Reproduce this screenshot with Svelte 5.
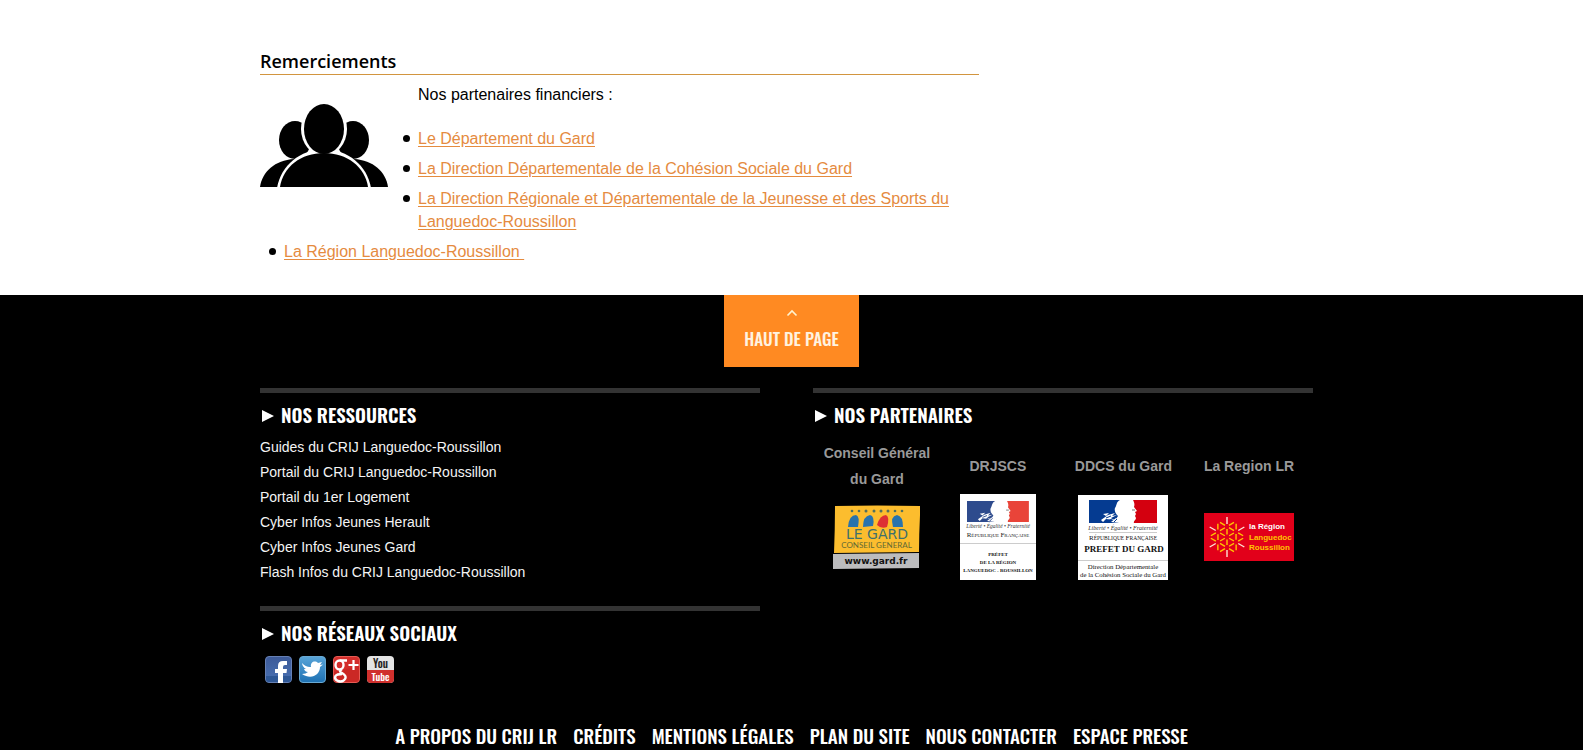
<script>
  const resources = [
    'Guides du CRIJ Languedoc-Roussillon',
    'Portail du CRIJ Languedoc-Roussillon',
    'Portail du 1er Logement',
    'Cyber Infos Jeunes Herault',
    'Cyber Infos Jeunes Gard',
    'Flash Infos du CRIJ Languedoc-Roussillon'
  ];
  const pages = ['A propos du CRIJ LR', 'Crédits', 'Mentions légales', 'Plan du site', 'Nous contacter', 'Espace presse'];
  // One arm of the sun emblem, repeated every 60 degrees
  const arms = [0, 60, 120, 180, 240, 300];
</script>

{#snippet arrow()}
  <svg class="arrow" width="12" height="12" viewBox="0 0 12 12" aria-hidden="true"><path d="M0 0 12 6 0 12z" fill="#fff" /></svg>
{/snippet}

{#snippet marianne(blue, red)}
  <rect width="68" height="23" fill="#fff" />
  <path d="M0 0H31C27 2 28 5 26 8C25 11 27 14 29 16L27 19 30 23H0z" fill={blue} />
  <path d="M44 0H68V23H45C44 21 47 20 47 18L46 16 47 14 46 12 48 11 45 7C46 4 45 2 44 0z" fill={red} />
  <path d="M12 20 19 15 26 13 23 16 28 15 22 18 26 20 17 19 14 22zM14 14 20 13 17 16zM22 22 27 18 31 23z" fill="#fff" />
  <path d="M17 18 22 16M19 21 27 17M25 22 28 19" stroke={blue} stroke-width="1" fill="none" />
  <path d="M43 10 46 10" stroke="#777" stroke-width="1" />
{/snippet}

<main class="wrap">
  <section class="thanks">
    <h1>Remerciements</h1>
    <svg class="people" width="128" height="84" viewBox="0 0 128 84" role="img" aria-label="Partenaires">
      <ellipse cx="35" cy="36" rx="16" ry="19" />
      <ellipse cx="93" cy="36" rx="16" ry="19" />
      <path d="M0 83C2 68 15 56 34 55C52 55 66 65 69 83z" />
      <path d="M128 83C126 68 113 56 94 55C76 55 62 65 59 83z" />
      <path d="M17 84C21 61 40 46 64 45C88 46 107 61 111 84z" fill="#fff" />
      <ellipse cx="64" cy="25" rx="23" ry="27" fill="#fff" />
      <path d="M20 83C23 63 41 49 64 49C87 49 105 63 108 83z" />
      <ellipse cx="64" cy="25" rx="20" ry="25" />
    </svg>
    <p>Nos partenaires financiers :</p>
    <ul>
      <li><a href="#gard">Le Département du Gard</a></li>
      <li><a href="#ddcs">La Direction Départementale de la Cohésion Sociale du Gard</a></li>
      <li><a href="#drjscs">La Direction Régionale et Départementale de la Jeunesse et des Sports du Languedoc-Roussillon</a></li>
      <li><a href="#region">La Région Languedoc-Roussillon&nbsp;</a></li>
    </ul>
  </section>
</main>

<footer>
  <a class="top" href="#app">
    <svg width="12" height="8" viewBox="0 0 12 8" aria-hidden="true"><path d="M1.500 6.500 6 2l4.500 4.500" fill="none" stroke="#fff3d0" stroke-width="1.600" /></svg>
    <span>HAUT DE PAGE</span>
  </a>

  <div class="wrap columns">
    <div class="left">
      <section class="block">
        <h2>{@render arrow()}NOS RESSOURCES</h2>
        <ul class="links">
          {#each resources as item}
            <li><a href="#ressources">{item}</a></li>
          {/each}
        </ul>
      </section>
      <section class="block">
        <h2>{@render arrow()}NOS RÉSEAUX SOCIAUX</h2>
        <div class="social">
          <a href="#facebook" aria-label="Facebook">
            <svg width="27" height="27" viewBox="0 0 27 27">
              <defs><linearGradient id="fb" x2="0" y2="1"><stop stop-color="#3d5a98" /><stop offset="1" stop-color="#4a72b4" /></linearGradient></defs>
              <rect x=".5" y=".5" width="26" height="26" rx="3.500" fill="url(#fb)" stroke="#6680b4" />
              <path d="M1 20H26V23Q26 26 23 26H4Q1 26 1 23z" fill="#2e5795" />
              <path d="M13 27V17H10V13H13V10Q13 5 18 5H22V9H20Q18 9 18 11V13H22L21.500 17H18V27z" fill="#fff" />
            </svg>
          </a>
          <a href="#twitter" aria-label="Twitter">
            <svg width="27" height="27" viewBox="0 0 27 27">
              <defs><linearGradient id="tw" x2="0" y2="1"><stop stop-color="#59a5d8" /><stop offset="1" stop-color="#1e71b3" /></linearGradient></defs>
              <rect x=".5" y=".5" width="26" height="26" rx="3.500" fill="url(#tw)" stroke="#69a9d3" />
              <path d="M3 7Q7 11.500 12 11C11 6 16 4 19 7L23 6 21 9 24 8.500 21 11C21 19 12 24 3 18Q7 18 9 16Q6 16 5 13H7Q3.500 11 3 7z" fill="#fff" />
            </svg>
          </a>
          <a href="#google" aria-label="Google+">
            <svg width="27" height="27" viewBox="0 0 27 27">
              <rect x=".5" y=".5" width="26" height="26" rx="3.500" fill="#d42e2b" stroke="#e65b54" />
              <path d="M1 16 26 10V23Q26 26 23 26H4Q1 26 1 23z" fill="#bd201f" opacity=".4" />
              <g fill="none" stroke="#fff" stroke-width="2.400">
                <ellipse cx="6.500" cy="9" rx="4" ry="4.500" />
                <path d="M7 4.500H14M9 13.500Q5 15 9 17Q14 20 12 23Q10 26.500 5 25Q1 23 2.500 20Q4 18 9 18" />
                <path d="M20.500 4V14M15.500 9H25.500" stroke-width="2.200" />
              </g>
            </svg>
          </a>
          <a href="#youtube" aria-label="YouTube">
            <svg width="27" height="27" viewBox="0 0 27 27">
              <rect width="27" height="27" rx="4" fill="#e4e4e4" />
              <path d="M0 14H27V23Q27 27 23 27H4Q0 27 0 23z" fill="#d0302d" />
              <text class="narrow" x="13.500" y="11.500" font-size="11" fill="#222">You</text>
              <text class="narrow" x="13.500" y="24.500" font-size="10" fill="#fff">Tube</text>
            </svg>
          </a>
        </div>
      </section>
    </div>

    <section class="block">
      <h2>{@render arrow()}NOS PARTENAIRES</h2>
      <table>
        <thead>
          <tr><th class="c1" scope="col">Conseil Général du Gard</th><th class="c2" scope="col">DRJSCS</th><th class="c3" scope="col">DDCS du Gard</th><th class="c4" scope="col">La Region LR</th></tr>
        </thead>
        <tbody>
          <tr>
            <td>
              <a href="#cg" aria-label="Le Gard">
                <svg width="88" height="64" viewBox="0 0 88 64">
                  <path d="M2 1Q44 0 87 1V10Q86 30 86 47L1 48Q2 24 2 1z" fill="#fcbd2e" />
                  <g fill="#53705c">
                    <circle cx="19" cy="6" r="1.300" /><circle cx="26" cy="6" r="1.300" /><circle cx="33" cy="6" r="1.500" /><circle cx="41" cy="6" r="1.500" />
                    <circle cx="48" cy="6" r="1.500" /><circle cx="55" cy="6" r="1.500" /><circle cx="62" cy="6" r="1.300" /><circle cx="69" cy="6" r="1.300" />
                  </g>
                  <g fill="#2873ad">
                    <path d="M15 22Q16 10 23 10Q27 11 25 22z" />
                    <path d="M30 22Q30 11 37 10Q42 11 40 21z" />
                    <path d="M60 22Q57 11 64 10Q70 11 70 22z" />
                  </g>
                  <path d="M44 20Q47 10 53 10Q57 12 54 22Q48 24 44 20z" fill="#dd3034" />
                  <text x="44" y="34" font-size="14" fill="#40706c" class="wide">LE GARD</text>
                  <text x="43.500" y="43" font-size="8" fill="#616a35" class="sans">CONSEIL GENERAL</text>
                  <path d="M0 49 86 48V63L0 64z" fill="#bcbcbe" />
                  <text x="43" y="59" font-size="9" fill="#111" font-weight="700" class="wide">www.gard.fr</text>
                </svg>
              </a>
            </td>
            <td>
              <a href="#drjscs" aria-label="Préfet de la région">
                <svg width="76" height="86" viewBox="0 0 76 86">
                  <rect width="76" height="86" fill="#fff" />
                  <g transform="translate(7 7) scale(.91)">{@render marianne('#2e4b8d', '#e94439')}</g>
                  <text x="38" y="34" font-size="5.500" font-style="italic" fill="#333" class="serif">Liberté • Égalité • Fraternité</text>
                  <text x="38" y="43" font-size="5" fill="#222" class="serif"><tspan font-size="7">R</tspan>ÉPUBLIQUE <tspan font-size="7">F</tspan>RANÇAISE</text>
                  <path d="M0 49.500H76" stroke="#ccc" />
                  <g font-size="5" font-weight="700" fill="#111" class="serif">
                    <text x="38" y="62">PRÉFET</text>
                    <text x="38" y="70">DE LA RÉGION</text>
                    <text x="38" y="78">LANGUEDOC - ROUSSILLON</text>
                  </g>
                </svg>
              </a>
            </td>
            <td>
              <a href="#ddcs" aria-label="Préfet du Gard">
                <svg width="90" height="85" viewBox="0 0 90 85">
                  <rect width="90" height="85" fill="#fff" />
                  <g transform="translate(11 5)">{@render marianne('#053b91', '#d4000f')}</g>
                  <text x="45" y="35" font-size="6" font-style="italic" fill="#333" class="serif">Liberté • Égalité • Fraternité</text>
                  <path d="M11 37.500H79M0 65.500H90" stroke="#ccc" />
                  <text x="45" y="45" font-size="5.500" fill="#111" class="serif"><tspan font-size="7">R</tspan>ÉPUBLIQUE <tspan font-size="7">F</tspan>RANÇAISE</text>
                  <text x="46" y="57" font-size="9" font-weight="700" fill="#111" class="serif">PREFET DU GARD</text>
                  <text x="45" y="74" font-size="6.800" fill="#111" class="serif">Direction Départementale</text>
                  <text x="45" y="82" font-size="6.800" fill="#111" class="serif">de la Cohésion Sociale du Gard</text>
                </svg>
              </a>
            </td>
            <td>
              <a href="#lr" aria-label="La Région Languedoc Roussillon">
                <svg width="90" height="48" viewBox="0 0 90 48">
                  <rect width="90" height="48" fill="#e2001a" />
                  <g transform="translate(23 24)" fill="none" stroke-width="1.400" stroke="#ffc400">
                    {#each arms as turn}
                      <g transform="rotate({turn})">
                        <path d="M0-2.500V-8M2-9.300 7-6.400" />
                        <path d="M2-11.700 7-14.600M-2-11.700-7-14.600" />
                        <path d="M0-13V-20" stroke="#ffe3d6" />
                      </g>
                    {/each}
                  </g>
                  <g font-size="8" font-weight="700" class="label">
                    <text x="45" y="16" fill="#fff">la Région</text>
                    <text x="45" y="27" fill="#ffc400">Languedoc</text>
                    <text x="45" y="37" fill="#ffc400">Roussillon</text>
                  </g>
                </svg>
              </a>
            </td>
          </tr>
        </tbody>
      </table>
    </section>
  </div>

  <nav aria-label="Pied de page">
    {#each pages as page}
      <a href="#page">{page}</a>
    {/each}
  </nav>
</footer>

<style>
  :global(body) {
    margin: 0;
    background: #fff;
    font-family: "Liberation Sans", Arial, sans-serif;
  }
  .wrap {
    max-width: 1063px;
    margin: 0 auto;
  }
  .thanks {
    max-width: 719px;
    padding: 49px 0 32px;
    font-size: 16px;
    line-height: 23px;
  }
  h1 {
    margin: 0 0 8px;
    border-bottom: 1px solid #d2953f;
    font: 600 18px/25px "Open Sans", sans-serif;
  }
  .people {
    float: left;
    margin: 21px 30px 42px 0;
  }
  p {
    margin: 0 0 21px;
  }
  ul {
    margin: 0;
    padding: 0 0 0 24px;
    list-style: none;
  }
  li + li {
    margin-top: 7px;
  }
  .thanks li::before {
    content: "";
    display: inline-block;
    width: 7px;
    height: 7px;
    margin: 0 8px 0 -15px;
    border-radius: 50%;
    background: #000;
    vertical-align: 2px;
  }
  .thanks a {
    color: #e58b3f;
    text-underline-offset: 2px;
  }
  footer {
    background: #000;
    color: #fff;
    padding-bottom: 3px;
  }
  .top {
    display: flex;
    flex-direction: column;
    align-items: center;
    gap: 10px;
    width: 135px;
    height: 72px;
    box-sizing: border-box;
    padding-top: 14px;
    margin: 0 auto 21px;
    background: #ff8a22;
    color: #fff3e0;
    text-decoration: none;
    font: 500 17px/24px Oswald, "Liberation Sans Narrow", sans-serif;
  }
  .columns {
    display: grid;
    grid-template-columns: 1fr 1fr;
    gap: 53px;
    padding-right: 10px;
    box-sizing: border-box;
  }
  .left {
    display: grid;
    gap: 21px;
  }
  .block {
    border-top: 5px solid #333;
  }
  h2 {
    display: flex;
    align-items: center;
    gap: 7px;
    margin: 0;
    padding-left: 2px;
    font: 600 19px/42px Oswald, "Liberation Sans Narrow", sans-serif;
  }
  .arrow {
    margin-top: 4px;
  }
  .links {
    padding: 0;
    font-size: 14px;
    line-height: 25px;
  }
  .links li {
    margin: 0;
  }
  .links a {
    color: #f4f4f4;
    text-decoration: none;
  }
  .social {
    display: flex;
    gap: 7px;
    padding: 3px 5px 0;
  }
  svg {
    display: block;
  }
  table {
    width: 100%;
    margin-top: 5px;
    padding-right: 7px;
    border-spacing: 0;
    table-layout: fixed;
  }
  th {
    padding: 0 4px 2px;
    color: #999;
    font-size: 14px;
    line-height: 26px;
  }
  .c1 {
    width: 26%;
  }
  .c2 {
    width: 23%;
  }
  .c3 {
    width: 28%;
  }
  .c4 {
    width: 23%;
  }
  td {
    padding: 0;
    vertical-align: middle;
  }
  td svg {
    margin: 0 auto;
  }
  text {
    text-anchor: middle;
  }
  .narrow {
    font-family: Oswald, "Liberation Sans Narrow", sans-serif;
    font-weight: 500;
  }
  .sans {
    font-family: Lato, sans-serif;
  }
  .wide {
    font-family: "DejaVu Sans", sans-serif;
  }
  .serif {
    font-family: "Liberation Serif", serif;
  }
  .label {
    font-family: "Liberation Sans", sans-serif;
  }
  .label text {
    text-anchor: start;
  }
  nav {
    display: flex;
    flex-wrap: wrap;
    justify-content: center;
    gap: 0 16px;
    margin-top: 40px;
    font: 500 19px/24px Oswald, "Liberation Sans Narrow", sans-serif;
  }
  nav a {
    color: #fff;
    text-decoration: none;
    text-transform: uppercase;
  }
</style>
